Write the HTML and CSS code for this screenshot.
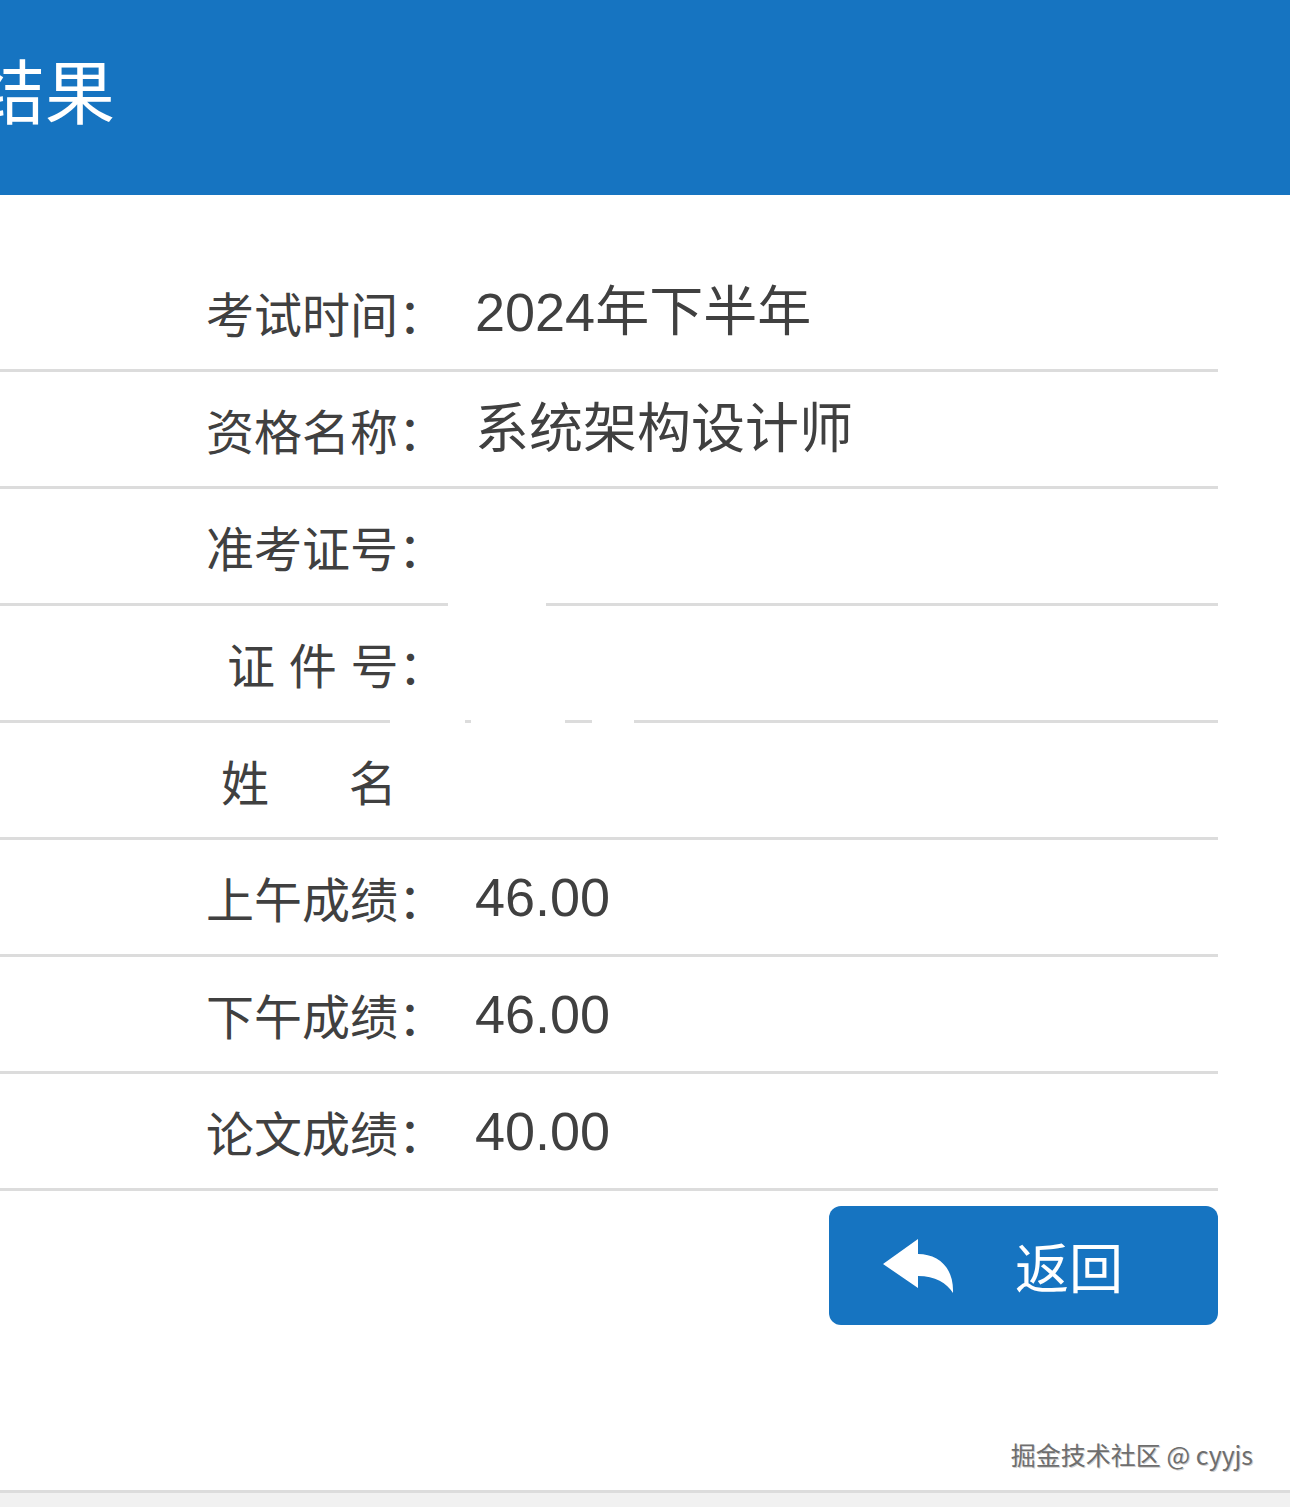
FILE: index.html
```html
<!DOCTYPE html>
<html lang="zh-CN">
<head>
<meta charset="utf-8">
<title>成绩查询结果</title>
<link rel="stylesheet" href="styles.css">
</head>
<body>
<div class="page">
  <header class="topbar">
    <h1 class="title">结果</h1>
  </header>

  <main class="info">
    <div class="row">
      <span class="label">考试时间：</span>
      <span class="value">2024年下半年</span>
    </div>
    <div class="row">
      <span class="label">资格名称：</span>
      <span class="value">系统架构设计师</span>
    </div>
    <div class="row">
      <span class="label">准考证号：</span>
      <span class="value"></span>
      <span class="redact redact-a"></span>
    </div>
    <div class="row">
      <span class="label label-id">证 件 号：</span>
      <span class="value"></span>
      <span class="redact redact-b"></span>
      <span class="redact redact-c"></span>
      <span class="redact redact-d"></span>
    </div>
    <div class="row">
      <span class="label label-name">姓 名</span>
      <span class="value"></span>
    </div>
    <div class="row">
      <span class="label">上午成绩：</span>
      <span class="value">46.00</span>
    </div>
    <div class="row">
      <span class="label">下午成绩：</span>
      <span class="value">46.00</span>
    </div>
    <div class="row">
      <span class="label">论文成绩：</span>
      <span class="value">40.00</span>
    </div>
  </main>

  <div class="actions">
    <button class="back-btn" type="button">
      <svg class="back-icon" viewBox="0 0 72 56" aria-hidden="true">
        <path d="M0 26 L35 1 L35 16 C55 16 71 29 70 55 C64 45 52 38 35 38 L35 50 Z" fill="#ffffff"/>
      </svg>
      <span class="back-text">返回</span>
    </button>
  </div>

  <footer class="watermark">掘金技术社区 @ cyyjs</footer>
</div>
</body>
</html>
```

FILE: styles.css
```css
* {
  box-sizing: border-box;
}

html, body {
  margin: 0;
  padding: 0;
}

body {
  background: #f1f1f1;
  min-height: 1507px;
  font-family: "Noto Sans CJK SC", "Liberation Sans", sans-serif;
  color: #404040;
  overflow: hidden;
}

.page {
  background: #ffffff;
  border-bottom: 3px solid #dcdcdc;
}

.topbar {
  height: 195px;
  background: #1674c1;
  display: flex;
  align-items: center;
  padding-bottom: 18px;
  overflow: hidden;
}

.title {
  margin: 0 0 0 -25px;
  font-size: 70px;
  font-weight: 400;
  color: #ffffff;
  line-height: 1;
  letter-spacing: 0;
}

.info {
  padding-top: 60px;
  width: 1218px;
}

.row {
  position: relative;
  display: flex;
  align-items: center;
  height: 117px;
  border-bottom: 3px solid #dcdcdc;
  padding-left: 206px;
}

.label {
  width: 269px;
  flex: none;
  font-size: 48px;
  line-height: 1;
  color: #404040;
  white-space: pre;
}

.label-id {
  padding-left: 21px;
  word-spacing: 3px;
}

.label-name {
  padding-left: 15px;
  word-spacing: 69px;
}

.value {
  font-family: "Liberation Sans", "Noto Sans CJK SC", sans-serif;
  font-size: 54px;
  line-height: 1;
  color: #404040;
}

.redact {
  position: absolute;
  bottom: -3px;
  height: 3px;
  background: #ffffff;
}

.redact-a {
  left: 448px;
  width: 98px;
}

.redact-b {
  left: 390px;
  width: 75px;
}

.redact-c {
  left: 471px;
  width: 94px;
}

.redact-d {
  left: 592px;
  width: 42px;
}

.actions {
  width: 1218px;
  display: flex;
  justify-content: flex-end;
  padding-top: 15px;
}

.back-btn {
  width: 389px;
  height: 119px;
  border: none;
  border-radius: 12px;
  background: #1674c1;
  color: #ffffff;
  display: flex;
  align-items: center;
  padding: 0 0 0 54px;
  font-family: "Noto Sans CJK SC", sans-serif;
  cursor: pointer;
}

.back-icon {
  width: 72px;
  height: 56px;
  flex: none;
}

.back-text {
  margin-left: 60px;
  font-size: 54px;
  line-height: 1;
  letter-spacing: 0;
}

.watermark {
  margin-top: 114px;
  padding: 0 37px 21px 0;
  text-align: right;
  font-size: 25px;
  line-height: 30px;
  color: #6e6e6e;
  text-shadow: 1px 1px 0 #d0d0d0;
}
```
